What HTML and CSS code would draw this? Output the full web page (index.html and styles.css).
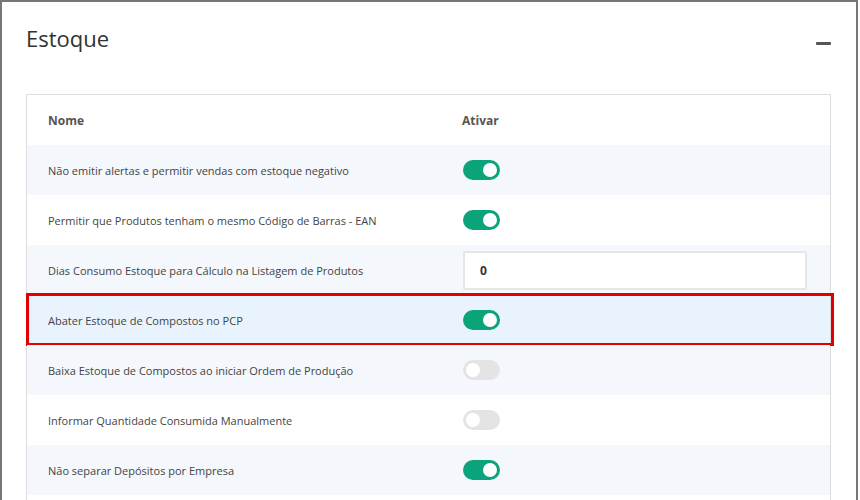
FILE: index.html
```html
<!doctype html>
<html>
<head>
<meta charset="utf-8">
<title>Estoque</title>
<link rel="stylesheet" href="styles.css">
</head>

<body>
	<div class="panel">
		<div class="panel-head">
			<h2 class="panel-title">Estoque</h2>
			<span class="collapse"></span>
		</div>

		<div class="table">
			<div class="row head">
				<div class="col-name">Nome</div>
				<div class="col-on">Ativar</div>
			</div>
			<div class="row alt">
				<div class="col-name">Não emitir alertas e permitir vendas com estoque negativo</div>
				<div class="col-on"><span class="switch on"></span></div>
			</div>
			<div class="row">
				<div class="col-name">Permitir que Produtos tenham o mesmo Código de Barras - EAN</div>
				<div class="col-on"><span class="switch on"></span></div>
			</div>
			<div class="row alt">
				<div class="col-name">Dias Consumo Estoque para Cálculo na Listagem de Produtos</div>
				<div class="col-on"><input class="field" type="text" value="0"></div>
			</div>
			<div class="row marked">
				<div class="col-name">Abater Estoque de Compostos no PCP</div>
				<div class="col-on"><span class="switch on"></span></div>
			</div>
			<div class="row alt">
				<div class="col-name">Baixa Estoque de Compostos ao iniciar Ordem de Produção</div>
				<div class="col-on"><span class="switch"></span></div>
			</div>
			<div class="row">
				<div class="col-name">Informar Quantidade Consumida Manualmente</div>
				<div class="col-on"><span class="switch"></span></div>
			</div>
			<div class="row alt">
				<div class="col-name">Não separar Depósitos por Empresa</div>
				<div class="col-on"><span class="switch on"></span></div>
			</div>
			<div class="row"></div>
		</div>
	</div>
</body>
</html>
```

FILE: styles.css
```css
	*{
		padding: 0;
		margin: 0;
		box-sizing: border-box;
	}
	body{
		background: #fff;
		font-family: "Open Sans", "Liberation Sans", sans-serif;
		color: #444;
	}
	.panel{
		width: 858px;
		min-height: 520px;
		border: 2px solid #777;
		border-bottom: none;
		padding: 21px 25px 0 24px;
		background: #fff;
	}
	.panel .panel-head{
		display: flex;
		justify-content: space-between;
		align-items: flex-start;
	}
	.panel .panel-title{
		font-size: 22px;
		line-height: 30px;
		font-weight: 400;
		color: #333;
	}
	.panel .collapse{
		width: 15px;
		height: 3px;
		margin-top: 19px;
		background: #555;
		border-radius: 1px;
	}
	.table{
		margin-top: 41px;
		border: 1px solid #ddd;
		border-bottom: none;
	}
	.table .row{
		display: grid;
		grid-template-columns: 414px 1fr;
		align-items: center;
		height: 50px;
		padding: 0 22px 0 21px;
		font-size: 11px;
		color: #444;
		position: relative;
	}
	.table .row.alt{
		background: #f4f7fb;
	}
	.table .row.head{
		font-size: 12px;
		font-weight: 700;
		color: #555;
	}
	.table .row.marked{
		background: #e9f3fd;
	}
	/* marcação vermelha por cima da linha */
	.table .row.marked:after{
		content: "";
		position: absolute;
		left: -1px;
		right: -4px;
		top: -2px;
		bottom: -1px;
		border: 3px solid #e00000;
	}
	.switch{
		display: block;
		width: 37px;
		height: 20px;
		margin-left: 1px;
		border-radius: 10px;
		background: #e4e4e4;
		position: relative;
	}
	.switch:before{
		content: "";
		position: absolute;
		top: 3px;
		left: 3px;
		width: 14px;
		height: 14px;
		border-radius: 50%;
		background: #fff;
	}
	.switch.on{
		background: #0aa37a;
	}
	.switch.on:before{
		left: auto;
		right: 3px;
	}
	.field{
		display: block;
		width: 344px;
		height: 39px;
		margin-left: 1px;
		border: 2px solid #e6e6e6;
		border-radius: 2px;
		padding-left: 15px;
		font-family: "Open Sans", "Liberation Sans", sans-serif;
		font-size: 12px;
		font-weight: 700;
		color: #333;
		outline: none;
	}
```
